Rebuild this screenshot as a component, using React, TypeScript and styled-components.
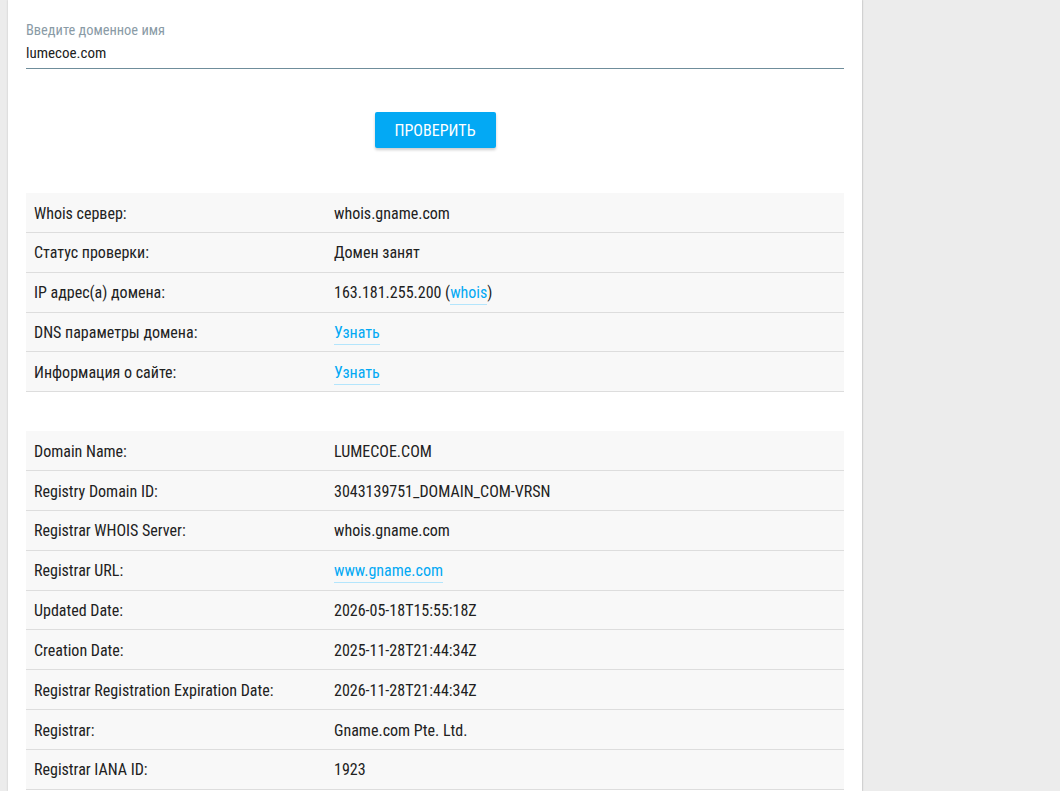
import React from "react";
import styled, { createGlobalStyle } from "styled-components";

const Global = createGlobalStyle`
  html, body { margin: 0; padding: 0; background: #ececec; }
  body { font-family: "Roboto Condensed", Roboto, "Liberation Sans", sans-serif; font-stretch: 75%; color: #212121; }
  * { box-sizing: border-box; }
`;

const Page = styled.div`
  display: flex;
  min-height: 791px;
  padding-left: 8px;
`;

const Card = styled.main`
  width: 854px;
  background: #fff;
  box-shadow: 0 0 2px rgba(0,0,0,0.18), 1px 0 1px rgba(0,0,0,0.06);
  padding: 22px 18px 0 18px;
`;

const Field = styled.div`
  display: flex;
  flex-direction: column;
  border-bottom: 1px solid #6f8d9b;
  padding-bottom: 4px;
`;

const FieldLabel = styled.label`
  font-size: 14.4px;
  line-height: 18px;
  color: #8a9ba6;
`;

const FieldValue = styled.div`
  font-size: 15px;
  line-height: 22px;
  margin-top: 2px;
  color: #212121;
`;

const Actions = styled.div`
  display: flex;
  justify-content: center;
  padding: 43px 0 45px;
`;

const Button = styled.button`
  width: 121px;
  height: 36px;
  border: none;
  border-radius: 2px;
  background: #03a9f4;
  color: #fff;
  font-family: inherit;
  font-stretch: 75%;
  font-size: 16px;
  text-transform: uppercase;
  box-shadow: 0 2px 3px rgba(0,0,0,0.2);
  cursor: pointer;
`;

const Table = styled.div<{ $gap?: number }>`
  display: flex;
  flex-direction: column;
  margin-bottom: ${(p) => p.$gap ?? 0}px;
`;

const Row = styled.div`
  display: grid;
  grid-template-columns: 300px 1fr;
  background: #f8f8f8;
  border-bottom: 1px solid #dddddd;
  font-size: 16px;
  line-height: 20.85px;
`;

const Cell = styled.div`
  padding: 10.5px 8px 7.5px;
`;

const Link = styled.a`
  color: #03a9f4;
  text-decoration: none;
  border-bottom: 1px solid #b3e5fc;
  padding-bottom: 2px;
`;

type Item = { k: string; v: React.ReactNode };

const top: Item[] = [
  { k: "Whois сервер:", v: "whois.gname.com" },
  { k: "Статус проверки:", v: "Домен занят" },
  { k: "IP адрес(а) домена:", v: <>163.181.255.200 (<Link href="#">whois</Link>)</> },
  { k: "DNS параметры домена:", v: <Link href="#">Узнать</Link> },
  { k: "Информация о сайте:", v: <Link href="#">Узнать</Link> },
];

const whois: Item[] = [
  { k: "Domain Name:", v: "LUMECOE.COM" },
  { k: "Registry Domain ID:", v: "3043139751_DOMAIN_COM-VRSN" },
  { k: "Registrar WHOIS Server:", v: "whois.gname.com" },
  { k: "Registrar URL:", v: <Link href="#">www.gname.com</Link> },
  { k: "Updated Date:", v: "2026-05-18T15:55:18Z" },
  { k: "Creation Date:", v: "2025-11-28T21:44:34Z" },
  { k: "Registrar Registration Expiration Date:", v: "2026-11-28T21:44:34Z" },
  { k: "Registrar:", v: "Gname.com Pte. Ltd." },
  { k: "Registrar IANA ID:", v: "1923" },
];

const Rows = ({ items }: { items: Item[] }) => (
  <>
    {items.map((it) => (
      <Row key={it.k}>
        <Cell>{it.k}</Cell>
        <Cell>{it.v}</Cell>
      </Row>
    ))}
  </>
);

export default function App() {
  return (
    <Page>
      <Global />
      <Card>
        <Field>
          <FieldLabel>Введите доменное имя</FieldLabel>
          <FieldValue>lumecoe.com</FieldValue>
        </Field>
        <Actions>
          <Button>Проверить</Button>
        </Actions>
        <Table $gap={39}>
          <Rows items={top} />
        </Table>
        <Table>
          <Rows items={whois} />
        </Table>
      </Card>
    </Page>
  );
}
